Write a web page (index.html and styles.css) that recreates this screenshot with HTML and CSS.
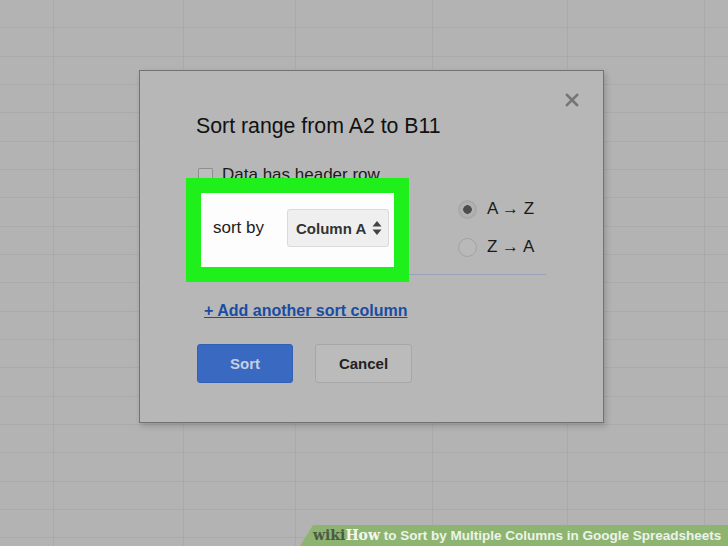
FILE: index.html
```html
<!DOCTYPE html>
<html>
<head>
<meta charset="utf-8">
<title>Sort range</title>
<link rel="stylesheet" href="styles.css">
</head>
<body>
  <div class="sheet">
    <div class="dialog">
      <div class="dialog-head">
        <h2 class="title">Sort range from A2 to B11</h2>
        <span class="close">
          <svg width="14" height="14" viewBox="0 0 14 14"><path d="M2 2L12 12M12 2L2 12" stroke="#767676" stroke-width="2.6" stroke-linecap="square"/></svg>
        </span>
      </div>

      <label class="header-row">
        <span class="checkbox"></span>
        <span>Data has header row</span>
      </label>

      <div class="sort-row">
        <div class="highlight">
          <span class="sort-label">sort by</span>
          <div class="select">
            <span>Column A</span>
            <svg width="10" height="16" viewBox="0 0 10 16"><path d="M5 1L9.5 6.5H0.5Z M5 15L9.5 9.5H0.5Z" fill="#444"/></svg>
          </div>
        </div>
        <div class="radios">
          <div class="radio-item"><span class="radio checked"></span>A &rarr; Z</div>
          <div class="radio-item"><span class="radio"></span>Z &rarr; A</div>
        </div>
      </div>

      <a class="add-link" href="#">+ Add another sort column</a>

      <div class="buttons">
        <button class="btn btn-sort">Sort</button>
        <button class="btn btn-cancel">Cancel</button>
      </div>
    </div>

    <div class="wikihow"><span class="wiki">wiki</span><span class="how">How</span> to Sort by Multiple Columns in Google Spreadsheets</div>
  </div>
</body>
</html>
```

FILE: styles.css
```css
body {
    margin: 0;
    font-family: "Liberation Sans", Arial, sans-serif;
    background-color: #b3b3b3;
}

.sheet {
    position: relative;
    width: 728px;
    height: 546px;
    overflow: hidden;
    padding-top: 70px;
    box-sizing: border-box;
    background-color: #b3b3b3;
    background-image:
        repeating-linear-gradient(to bottom, transparent 0, transparent 27.33px, #aaaaaa 27.33px, #aaaaaa 28.33px),
        linear-gradient(to right, transparent 53px, #aaaaaa 53px, #aaaaaa 54px, transparent 54px,
            transparent 183px, #aaaaaa 183px, #aaaaaa 184px, transparent 184px,
            transparent 295px, #aaaaaa 295px, #aaaaaa 296px, transparent 296px,
            transparent 432px, #aaaaaa 432px, #aaaaaa 433px, transparent 433px,
            transparent 567px, #aaaaaa 567px, #aaaaaa 568px, transparent 568px,
            transparent 704px, #aaaaaa 704px, #aaaaaa 705px, transparent 705px);
}

.dialog {
    margin-left: 139px;
    width: 465px;
    height: 353px;
    box-sizing: border-box;
    background-color: #b7b7b7;
    border: 1px solid #727272;
    box-shadow: 2px 3px 6px rgba(0, 0, 0, 0.18);
    padding: 42px 0 0 56px;
}

.dialog-head {
    display: flex;
    justify-content: space-between;
    align-items: flex-start;
}

.title {
    margin: 0;
    font-size: 21.3px;
    line-height: 26px;
    font-weight: normal;
    color: #111;
}

.close {
    margin: -20px 24px 0 0;
    line-height: 0;
}

.header-row {
    display: flex;
    align-items: center;
    height: 20px;
    margin-top: 26px;
    font-size: 17px;
    color: #1a1a1a;
}

.checkbox {
    width: 13px;
    height: 13px;
    margin-left: 2px;
    margin-right: 9px;
    border: 1px solid #8e8e8e;
    border-radius: 1px;
    background-color: #bdbdbd;
}

.sort-row {
    display: flex;
    align-items: flex-start;
    width: 360px;
    margin: -7px 0 0 -10px;
    border-bottom: 1px solid #97a2bb;
}

.highlight {
    display: flex;
    align-items: center;
    width: 193px;
    height: 74px;
    box-sizing: content-box;
    border: 15px solid #1ff01c;
    background-color: #fdfdfd;
    padding: 0;
    margin-bottom: -8px;
}

.highlight .sort-label {
    margin-left: 12px;
    font-size: 17px;
    color: #1c1c1c;
    margin-top: -4px;
}

.select {
    display: flex;
    align-items: center;
    justify-content: space-between;
    width: 102px;
    height: 38px;
    box-sizing: border-box;
    margin-left: 23px;
    margin-top: -4px;
    padding: 0 6px 0 8px;
    background-color: #efefef;
    border: 1px solid #dadada;
    border-radius: 3px;
    font-size: 15px;
    font-weight: bold;
    color: #333;
}

.radios {
    margin: 19px 0 0 49px;
}

.radio-item {
    display: flex;
    align-items: center;
    height: 24px;
    margin-bottom: 14px;
    font-size: 17px;
    color: #1a1a1a;
}

.radio {
    width: 19px;
    height: 19px;
    box-sizing: border-box;
    margin-right: 10px;
    border: 1px solid #a2a2a2;
    border-radius: 50%;
    background-color: #b9b9b9;
}

.radio.checked {
    border: 2px solid #a9a9a9;
    background: radial-gradient(circle, #4d4d4d 0, #4d4d4d 4px, #b1b1b1 4.6px);
}

.add-link {
    display: inline-block;
    margin: 26px 0 0 8px;
    font-size: 16px;
    line-height: 20px;
    font-weight: bold;
    color: #1b4ca3;
    text-decoration: underline;
}

.buttons {
    display: flex;
    gap: 22px;
    margin: 23px 0 0 1px;
}

.btn {
    width: 96px;
    height: 39px;
    border-radius: 3px;
    font-family: "Liberation Sans", Arial, sans-serif;
    font-size: 15px;
    font-weight: bold;
    cursor: pointer;
}

.btn-sort {
    background-color: #3a69c2;
    border: 1px solid #3260b4;
    color: #c6cfdf;
}

.btn-cancel {
    width: 97px;
    background-color: #bbbbbb;
    border: 1px solid #a6a6a6;
    color: #222;
}

.wikihow {
    position: absolute;
    right: 0;
    bottom: 0;
    width: 428px;
    height: 21px;
    box-sizing: border-box;
    padding: 2px 0 0 13px;
    background-color: #8db571;
    clip-path: polygon(13px 0, 100% 0, 100% 100%, 0 100%);
    font-size: 13.5px;
    font-weight: bold;
    color: #eef3ea;
    white-space: nowrap;
}

.wikihow .wiki,
.wikihow .how {
    font-family: "DejaVu Serif", "Liberation Serif", serif;
    font-size: 14px;
}

.wikihow .wiki {
    color: #4c5a45;
}

.wikihow .how {
    color: #f4f7f1;
}
```
